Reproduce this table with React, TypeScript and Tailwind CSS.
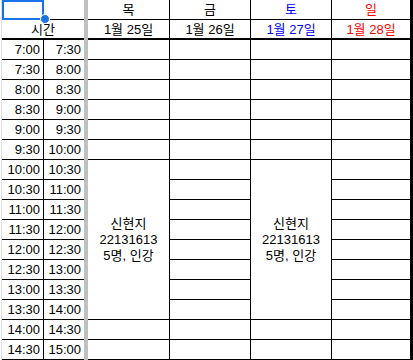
import React from 'react';

const slots: [string, string][] = [
  ['7:00', '7:30'],
  ['7:30', '8:00'],
  ['8:00', '8:30'],
  ['8:30', '9:00'],
  ['9:00', '9:30'],
  ['9:30', '10:00'],
  ['10:00', '10:30'],
  ['10:30', '11:00'],
  ['11:00', '11:30'],
  ['11:30', '12:00'],
  ['12:00', '12:30'],
  ['12:30', '13:00'],
  ['13:00', '13:30'],
  ['13:30', '14:00'],
  ['14:00', '14:30'],
  ['14:30', '15:00'],
];

const days = [
  { name: '목', date: '1월 25일', color: 'text-black' },
  { name: '금', date: '1월 26일', color: 'text-black' },
  { name: '토', date: '1월 27일', color: 'text-[#0000ff]' },
  { name: '일', date: '1월 28일', color: 'text-[#ff0000]' },
];

// reservations: day index -> first slot + length
const bookings: Record<number, { start: number; span: number; lines: string[] }> = {
  0: { start: 6, span: 8, lines: ['신현지', '22131613', '5명, 인강'] },
  2: { start: 6, span: 8, lines: ['신현지', '22131613', '5명, 인강'] },
};

export default function App() {
  return (
    <div className="w-[413px] h-[360px] overflow-hidden bg-white flex text-[13px] leading-[15px] text-black font-['Liberation_Sans','Noto_Sans_CJK_KR',sans-serif]">
      {/* frozen time columns */}
      <div className="pl-px">
        <div className="border-l border-[#e1e1e1] grid grid-cols-[42px_40px] grid-rows-[repeat(18,20px)]">
          <div className="relative border-b border-black">
            <div className="absolute left-0 top-0 w-[42px] h-[20px] border-2 border-[#1a73e8]" />
            <div className="absolute left-[38px] top-[14px] z-10 w-[10px] h-[10px] rounded-full bg-[#1a73e8] border border-white" />
          </div>
          <div className="border-b border-black" />
          <div className="col-span-2 border-b-2 border-black flex items-end justify-center pb-[1px]">시간</div>
          {slots.map(([from, to]) => (
            <React.Fragment key={from}>
              <div className="border-r border-b border-black flex items-end justify-end pr-[3px] pb-[2px]">{from}</div>
              <div className="border-b border-black flex items-end justify-end pr-[3px] pb-[2px]">{to}</div>
            </React.Fragment>
          ))}
        </div>
      </div>

      {/* freeze divider */}
      <div className="w-[4px] bg-[#c0c0c0]" />

      {/* day columns */}
      <div className="border-r-[3px] border-black">
        <div className="grid grid-cols-[82px_81px_81px_78px] grid-rows-[repeat(18,20px)]">
          {days.map((d, i) => (
            <div
              key={d.name}
              className={`border-b border-black flex items-end justify-center pb-[2px] ${d.color} ${i < 3 ? 'border-r' : ''}`}
            >
              {d.name}
            </div>
          ))}
          {days.map((d, i) => (
            <div
              key={d.date}
              className={`border-b-2 border-black flex items-end justify-center pb-[1px] ${d.color} ${i < 3 ? 'border-r' : ''}`}
            >
              {d.date}
            </div>
          ))}
          {slots.map((_, row) =>
            days.map((d, i) => {
              const b = bookings[i];
              const edge = i < 3 ? 'border-r' : '';
              if (b && row === b.start) {
                return (
                  <div
                    key={`${row}-${i}`}
                    className={`row-span-8 border-b border-black flex flex-col items-center justify-center leading-[16px] ${edge}`}
                  >
                    {b.lines.map((l) => (
                      <span key={l}>{l}</span>
                    ))}
                  </div>
                );
              }
              if (b && row > b.start && row < b.start + b.span) return null;
              return <div key={`${row}-${i}`} className={`border-b border-black ${edge}`} />;
            })
          )}
        </div>
      </div>
    </div>
  );
}
